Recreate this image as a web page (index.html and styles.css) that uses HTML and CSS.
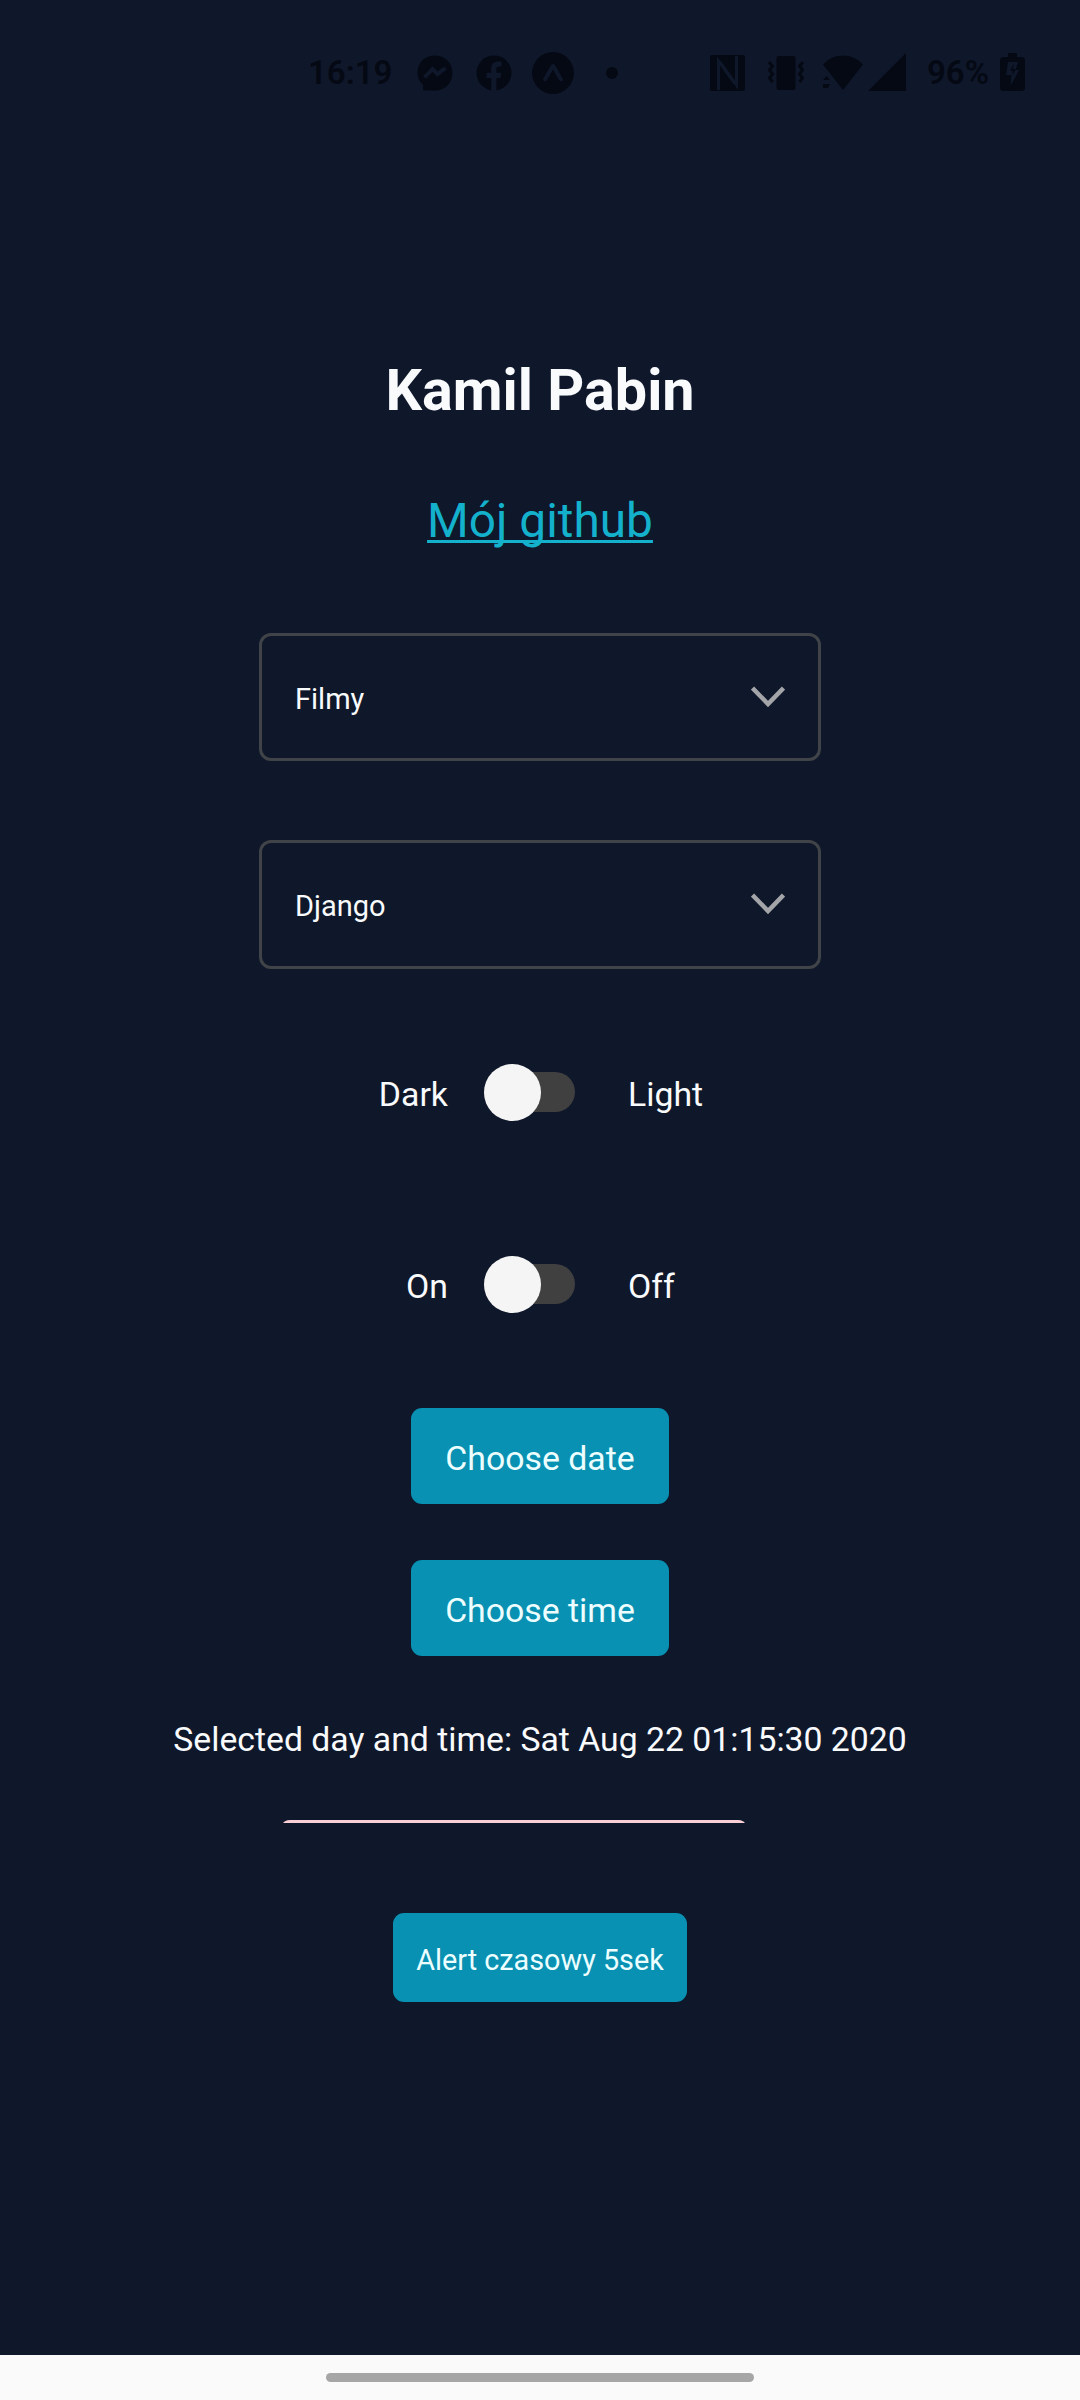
FILE: index.html
```html
<!DOCTYPE html>
<html lang="pl">
<head>
<meta charset="utf-8">
<title>Kamil Pabin</title>
<link rel="stylesheet" href="styles.css">
</head>
<body>
<header class="status">
  <span class="clock">16:19</span>
  <div class="notifications">
    <svg width="36" height="36" viewBox="0 0 36 36"><path class="ink" d="M18 .5C8 .5.5 7.700.5 17.500c0 5.500 2.200 9.500 5.500 12.500v5.500h12C28 35.500 35.500 28 35.500 18S28 .5 18 .5z"/><path class="cut-line" d="M7.500 22.500l8-8.500 5 5 8-6"/></svg>
    <svg width="36" height="36" viewBox="0 0 36 36"><circle class="ink" cx="18" cy="18" r="17.500"/><path class="cut" d="M15.200 36V23h-4.700v-5.300h4.700v-4c0-4.700 2.700-7.200 6.900-7.200 1.400 0 2.700.2 3.400.4v4.600h-2.200c-2.200 0-2.900 1.300-2.900 2.700v3.500h4.800l-.8 5.300h-4V36z"/></svg>
    <svg width="42" height="42" viewBox="0 0 42 42"><circle class="ink" cx="21" cy="21" r="21"/><path class="cut" d="M19.200 13c1-1.400 2.600-1.400 3.600 0 2.500 4 6.200 10.500 8 14 .6 1.500-1.600 3.300-3 1.800-1.800-2-4.800-7.800-6.800-11.300-2 3.500-5 9.300-6.800 11.300-1.400 1.500-3.600-.3-3-1.800 1.800-3.500 5.500-10 8-14z"/></svg>
  </div>
  <i class="more"></i>
  <div class="system">
    <svg width="35" height="36" viewBox="0 0 35 36"><rect class="ink" width="35" height="36" rx="2"/><path class="cut-line thin" d="M8.500 35V6L25 29M26.500 1v29L10 7"/></svg>
    <svg width="36" height="36" viewBox="0 0 36 36"><rect class="ink" x="8.500" y="1" width="19" height="34" rx="2"/><path class="ink-line" d="M1 7l3.500 4L1.500 15l3 4-3 4 3 4M35 7l-3.500 4 3 4-3 4 3 4-3 4"/></svg>
    <svg width="41" height="36" viewBox="0 0 41 36"><path class="ink" d="M1 9.500C12-2.500 30-2.500 41 9.500L21 35z"/><path class="ink" d="M1 25l3.500-4L8 25zM1 29h7l-2 4H1z"/></svg>
    <svg width="38" height="38" viewBox="0 0 38 38"><path class="ink" d="M38 0v38H0z"/></svg>
  </div>
  <span class="percent">96%</span>
  <svg class="battery" width="25" height="38" viewBox="0 0 25 38"><path class="ink" d="M8 0h9v4h6l2 2v30l-2 2H2l-2-2V6l2-2h6z"/><path class="cut" d="M8 9h10l-2.500 8H19l-8.500 16 1-11H6z"/><path class="ink" d="M14 10l-4 8h3l-1 5 4-7h-3z"/></svg>
</header>

<main class="screen">
  <h1 class="title">Kamil Pabin</h1>
  <a class="link" href="#">Mój github</a>

  <div class="selects">
    <div class="select"><span>Filmy</span><svg width="34" height="22" viewBox="0 0 34 22"><path class="chevron" d="M1.500 2l15.500 16L32.500 2"/></svg></div>
    <div class="select"><span>Django</span><svg width="34" height="22" viewBox="0 0 34 22"><path class="chevron" d="M1.500 2l15.500 16L32.500 2"/></svg></div>
  </div>

  <div class="toggles">
    <div class="toggle-row"><span class="before">Dark</span><i class="switch"></i><span class="after">Light</span></div>
    <div class="toggle-row"><span class="before">On</span><i class="switch"></i><span class="after">Off</span></div>
  </div>

  <div class="actions">
    <button class="button">Choose date</button>
    <button class="button">Choose time</button>
  </div>
  <p class="selected">Selected day and time: Sat Aug 22 01:15:30 2020</p>
  <div class="alert-slot"><div class="alert"></div></div>
  <button class="button small">Alert czasowy 5sek</button>
</main>

<footer class="nav"><i class="handle"></i></footer>
</body>
</html>
```

FILE: styles.css
```css
* { box-sizing: border-box; }

body {
  margin: 0;
  width: 1080px;
  height: 2400px;
  display: flex;
  flex-direction: column;
  overflow: hidden;
  background: #0f172a;
  color: #f8fafc;
  font-family: Roboto, sans-serif;
}

svg { display: block; flex: none; }

/* Status bar */
.status {
  height: 145px;
  padding: 0 55px 0 308px;
  display: flex;
  align-items: center;
  color: #050914;
  font-size: 33px;
  font-weight: 600;
}
.clock { width: 109px; padding-bottom: 1px; }
.notifications { display: flex; align-items: center; gap: 23px; }
.notifications svg:last-child { margin-left: -3px; }
.more { width: 12px; height: 12px; margin-left: 32px; border-radius: 50%; background: #050914; }
.system { display: flex; align-items: center; gap: 23px; margin-left: 92px; }
.system svg:nth-child(3) { margin-left: -5px; }
.system svg:last-child { margin: 0 0 2px -18px; }
.percent { margin-left: auto; margin-right: 11px; padding-bottom: 1px; }
.battery { margin-bottom: 2px; }
.ink { fill: #050914; }
.ink-line { fill: none; stroke: #050914; stroke-width: 3; }
.cut { fill: #0f172a; }
.cut-line { fill: none; stroke: #0f172a; stroke-width: 4; }
.thin { stroke-width: 3; }

/* Content */
.screen {
  flex: 1;
  display: flex;
  flex-direction: column;
  align-items: center;
  padding-top: 211px;
}
.title { margin: 0; font-size: 57.5px; line-height: 70px; font-weight: 700; }
.link {
  margin-top: 66px;
  font-size: 47.8px;
  line-height: 58px;
  color: #14b1cd;
  text-decoration: underline;
  text-decoration-thickness: 3px;
  text-underline-offset: 3px;
  text-decoration-skip-ink: none;
}

.selects { display: grid; gap: 79px; margin-top: 83px; }
.select {
  width: 562px;
  height: 128px;
  padding: 0 33px;
  display: flex;
  align-items: center;
  justify-content: space-between;
  border: 3px solid #404347;
  border-radius: 12px;
  font-size: 29px;
}
.select:last-child { height: 129px; }
.select:last-child svg { margin-bottom: 1px; }
.select span { padding-top: 3px; }
.chevron { fill: none; stroke: #a3a5a8; stroke-width: 4.5; }

.toggles { display: grid; gap: 134px; margin-top: 94px; }
.toggle-row {
  width: 1080px;
  height: 58px;
  display: grid;
  grid-template-columns: 448px 91px 1fr;
  column-gap: 35.5px;
  align-items: center;
  font-size: 33.8px;
}
.toggle-row span { padding-top: 5px; }
.before { text-align: right; }
.after { padding-left: 18px; }
.switch {
  width: 91px;
  height: 40px;
  border-radius: 20px;
  background: #404040;
  display: flex;
  align-items: center;
}
.switch::before {
  content: "";
  flex: none;
  width: 57px;
  height: 57px;
  border-radius: 50%;
  background: #f5f5f5;
}

.actions { display: grid; gap: 56px; margin-top: 95px; }
.button {
  width: 258px;
  height: 96px;
  padding: 5px 0 0;
  border: 0;
  border-radius: 11px;
  background: #0891b2;
  color: #ecfeff;
  font-family: inherit;
  font-size: 33.8px;
}
.selected { margin: 64px 0 0; font-size: 33.75px; line-height: 40px; }

/* Collapsed alert: only its top edge stays visible */
.alert-slot { width: 462px; height: 3px; margin: 60px 52px 0 0; overflow: hidden; }
.alert { height: 24px; border-radius: 7px 7px 0 0 / 4px 4px 0 0; background: #fbcfd6; }
.small { width: 294px; height: 89px; padding-top: 5px; margin-top: 90px; font-size: 28.8px; }

/* Gesture navigation */
.nav {
  height: 45px;
  background: #fafafa;
  display: flex;
  align-items: center;
  justify-content: center;
}
.handle { width: 428px; height: 9px; border-radius: 5px; background: #a6a6a6; }
```
